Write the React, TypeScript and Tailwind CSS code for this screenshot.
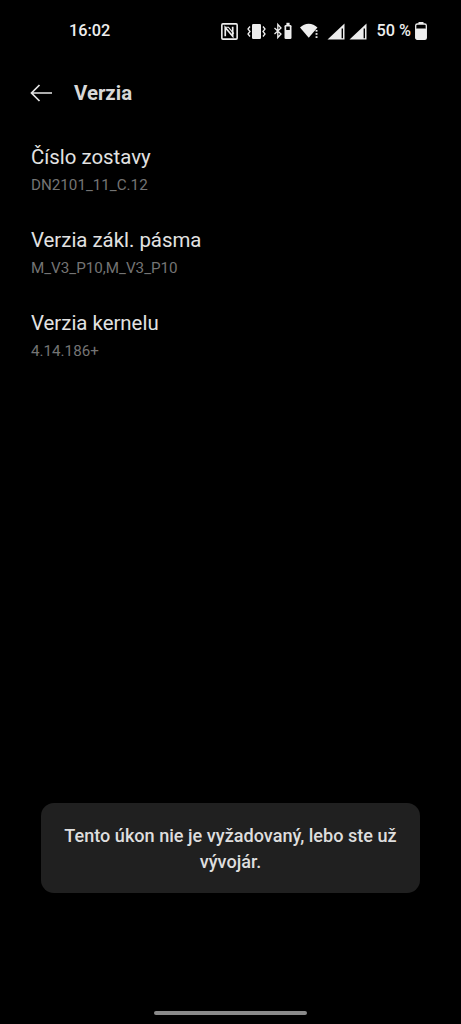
import React from "react";

function Nfc() {
  return (
    <svg width="17" height="17" viewBox="0 0 16 16" fill="none" className="shrink-0">
      <rect x="0.8" y="0.8" width="14.4" height="14.4" rx="1" stroke="#eee" strokeWidth="1.5" />
      <path d="M4 12.5V4.2L11 12.5V3.5" stroke="#eee" strokeWidth="1.6" fill="none" />
      <path d="M4 4h3l5 6" stroke="#eee" strokeWidth="1.1" fill="none" />
    </svg>
  );
}
function Vibrate() {
  return (
    <svg width="19" height="17" viewBox="0 0 19 16" fill="none" className="shrink-0">
      <rect x="5" y="0.5" width="9" height="15" rx="1.2" fill="#eee" />
      <path d="M3 3 1 5.5 3 8 1 10.5 3 13" stroke="#eee" strokeWidth="1.3" />
      <path d="M16 3 18 5.5 16 8 18 10.5 16 13" stroke="#eee" strokeWidth="1.3" />
    </svg>
  );
}
function BtBattery() {
  return (
    <svg width="18" height="18" viewBox="0 0 18 18" fill="none" className="shrink-0">
      <path d="M0.5 6 7 12 3.8 15.5V2.5L7 6 0.5 12" stroke="#eee" strokeWidth="1.3" />
      <rect x="10.5" y="3" width="7" height="14" rx="1.3" fill="#eee" />
      <rect x="12.4" y="0.8" width="3.2" height="2.4" fill="#eee" />
      <rect x="12.2" y="4.5" width="3.6" height="3.5" fill="#000" />
    </svg>
  );
}
function Wifi() {
  return (
    <svg width="20" height="16" viewBox="0 0 19 15" fill="none" className="shrink-0">
      <path d="M0 4.2C4.5 -0.6 12 -0.6 16.6 4.2L8.3 14Z" fill="#eee" />
      <rect x="14.8" y="6.5" width="1.8" height="1.6" fill="#eee" />
      <rect x="14.8" y="9.5" width="1.8" height="1.6" fill="#eee" />
      <rect x="14.8" y="12.5" width="1.8" height="1.6" fill="#eee" />
    </svg>
  );
}
function Signal() {
  return (
    <svg width="18" height="17" viewBox="0 0 18 17" fill="none" className="shrink-0">
      <path d="M0.5 16.5 17.5 0.5V16.5Z" fill="#eee" />
      <path d="M14.6 5.5H16V15.2H14.6Z" fill="#000" />
    </svg>
  );
}
function Battery() {
  return (
    <svg width="12" height="18" viewBox="0 0 12 18" fill="none" className="shrink-0">
      <rect x="3.5" y="0" width="5" height="2" fill="#eee" />
      <rect x="0.7" y="2" width="10.6" height="15.3" rx="1.6" stroke="#eee" strokeWidth="1.3" />
      <rect x="0.7" y="6.5" width="10.6" height="10.8" rx="1.2" fill="#eee" />
    </svg>
  );
}

function Row({ title, sub }: { title: string; sub: string }) {
  return (
    <div className="flex flex-col h-[83px]">
      <div className="text-[20.4px] leading-[28px] text-[#e2e2e2]">{title}</div>
      <div className="text-[15.2px] leading-[20px] text-[#747474] mt-[4px]">{sub}</div>
    </div>
  );
}

export default function App() {
  return (
    <div className="relative w-[461px] h-[1024px] bg-black overflow-hidden font-['Roboto',sans-serif]">
      <div className="flex items-center h-[18px] mt-[22px] pl-[69px] pr-[34px] text-[#eee]">
        <span className="text-[16.3px] font-medium leading-[18px]">16:02</span>
        <div className="ml-auto flex items-center">
          <Nfc />
          <div className="ml-[9px]"><Vibrate /></div>
          <div className="ml-[8px]"><BtBattery /></div>
          <div className="ml-[8px]"><Wifi /></div>
          <div className="ml-[7px]"><Signal /></div>
          <div className="ml-[4px]"><Signal /></div>
          <span className="ml-[9px] text-[16.3px] font-medium leading-[18px] whitespace-nowrap">50 %</span>
          <div className="ml-[4px]"><Battery /></div>
        </div>
      </div>

      <div className="flex items-center mt-[38px] h-[30px] pl-[30px]">
        <svg width="23" height="18" viewBox="0 0 23 18" fill="none" className="shrink-0">
          <path d="M22 9H1.5M9.5 1 1.5 9l8 8" stroke="#e6e6e6" strokeWidth="1.7" />
        </svg>
        <span className="ml-[21px] text-[20.4px] font-bold text-[#d8d8d8] leading-[30px]">Verzia</span>
      </div>

      <div className="flex flex-col mt-[35px] pl-[31px]">
        <Row title="Číslo zostavy" sub="DN2101_11_C.12" />
        <Row title="Verzia zákl. pásma" sub="M_V3_P10,M_V3_P10" />
        <Row title="Verzia kernelu" sub="4.14.186+" />
      </div>

      <div className="absolute left-[41px] top-[803px] w-[379px] h-[90px] rounded-[13px] bg-[#202020] flex items-center justify-center px-[20px] pt-[1px]">
        <p className="text-center text-[18.1px] leading-[26px] font-medium text-[#dedede]">
          Tento úkon nie je vyžadovaný, lebo ste už vývojár.
        </p>
      </div>

      <div className="absolute left-[154px] top-[1011px] w-[153px] h-[4px] rounded-full bg-[#8a8a8a]" />
    </div>
  );
}
